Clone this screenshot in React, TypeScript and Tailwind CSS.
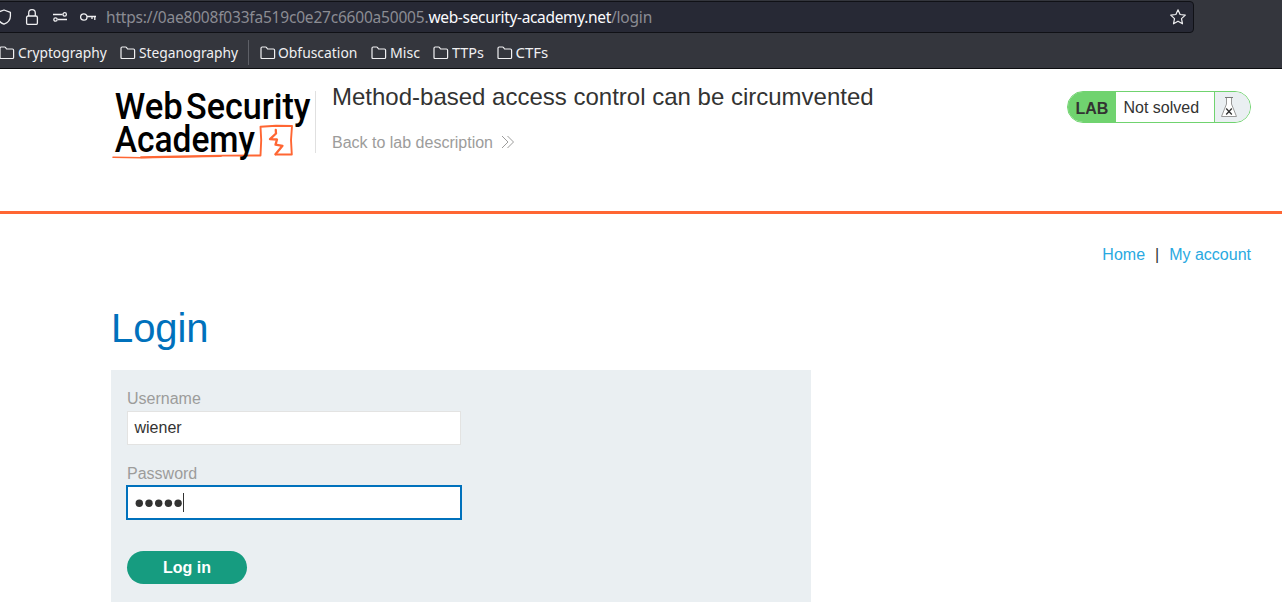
import type { ReactNode } from 'react';

function Folder() {
  return (
    <svg className="h-4 w-4 shrink-0" viewBox="0 0 16 16" fill="none" stroke="#f0f0f2" strokeWidth="1.2" strokeLinejoin="round">
      <path d="M1 12.5V3.200q0-1.200 1.200-1.200h3.400q.5 0 .8.4l1.200 1.600h5.800q1.200 0 1.200 1.200v7.300q0 1-1 1H2q-1 0-1-1z" />
    </svg>
  );
}

function Bookmark({ className, children }: { className: string; children: ReactNode }) {
  return (
    <div className={`flex shrink-0 items-center gap-[2.500px] ${className}`}>
      <Folder />
      <span className="-mt-0.5 origin-left whitespace-nowrap leading-5">{children}</span>
    </div>
  );
}

function BrowserChrome() {
  return (
    <header className="h-[69px] overflow-hidden border-b border-[#0c0d10] bg-[#34363d] pt-px font-['Noto_Sans',sans-serif] text-[#f0f0f2]">
      <div className="-ml-2 flex h-8 w-[1202px] items-center rounded-[4px] border border-[#101116] bg-[#272935] pl-[3px]">
        <svg className="h-4 w-4" viewBox="0 0 16 16" fill="none" stroke="#f0f0f2" strokeWidth="1.3" strokeLinejoin="round">
          <path d="M8 1 14.4 3.4V7c0 3.6-2.5 6.7-6.4 8.2C4.100 13.700 1.600 10.600 1.600 7V3.400z" />
        </svg>
        <svg className="ml-3 h-4 w-4" viewBox="0 0 16 16" fill="none" stroke="#f0f0f2" strokeWidth="1.3">
          <rect x="2.600" y="7" width="10.800" height="8.400" rx="1.500" />
          <path d="M4.700 7V4a3.300 3.300 0 0 1 6.600 0v3" />
        </svg>
        <svg className="ml-3 h-4 w-4" viewBox="0 0 16 16" fill="none" stroke="#f0f0f2" strokeWidth="1.3">
          <path d="M1 5.500h9.500M6 10.500h9" />
          <circle cx="12.700" cy="5.400" r="1.700" />
          <circle cx="3.500" cy="10.500" r="1.700" />
        </svg>
        <svg className="ml-3 h-4 w-4" viewBox="0 0 16 16" fill="none" stroke="#f0f0f2" strokeWidth="1.3">
          <circle cx="3.800" cy="8" r="3.200" />
          <path d="M7 7.500h9M14.800 7.500v3.500M12 7.500v2.500" />
        </svg>
        <div className="ml-[10px] whitespace-nowrap text-[15.500px] leading-[30px] tracking-[-0.200px] text-[#8b8c93]">
          https://0ae8008f033fa519c0e27c6600a50005.<span className="tracking-[-0.330px] text-[#fbfbfe]">web-security-academy.net</span>/login
        </div>
        <svg className="mr-[7px] ml-auto h-4 w-4" viewBox="0 0 16 16" fill="none" stroke="#f0f0f2" strokeWidth="1.2" strokeLinejoin="round">
          <path d="M8 .8l2.100 4.700 5.200.6-3.800 3.500 1 5.200L8 12.200l-4.500 2.600 1-5.200L.7 6.100l5.200-.6z" />
        </svg>
      </div>
      <nav className="flex h-[35px] items-center pt-[5px] text-[15px]">
        <Bookmark className="-ml-[1px] w-[121px] [&>span]:scale-x-[0.918]">Cryptography</Bookmark>
        <Bookmark className="w-[128px] [&>span]:scale-x-[0.920]">Steganography</Bookmark>
        <div className="-mt-px h-[25px] w-px bg-[#5e6067]" />
        <Bookmark className="ml-[10.500px] w-[111.500px] [&>span]:scale-x-[0.925]">Obfuscation</Bookmark>
        <Bookmark className="w-[62px] [&>span]:scale-x-[0.940]">Misc</Bookmark>
        <Bookmark className="w-[64px] [&>span]:scale-x-[0.960]">TTPs</Bookmark>
        <Bookmark className="w-[70px]">CTFs</Bookmark>
      </nav>
    </header>
  );
}

function AcademyLogo() {
  return (
    <svg className="h-[82px] w-[204px] shrink-0" viewBox="0 -10 204 82" role="img" aria-label="Web Security Academy">
      <g fill="none" stroke="#ff6633" strokeLinejoin="round" strokeLinecap="round">
        <path strokeWidth="1.600" d="M2 69.200 30 69.800 80 68.800 110 68.300" />
        <path strokeWidth="1.900" d="M30 69.300 80 68.300 112 67.600 149.500 67.500 150.200 52 149.500 38.800 165 37.700 181 38 180 52 180.800 66.500 164.500 66.500" />
        <path strokeWidth="2.300" d="M164.500 66.200 171.500 57.800 164.500 56.600 166 51.500 159 51.200 165 45.500 164.800 42" />
      </g>
      <g fill="#000" className="font-['Roboto',sans-serif] text-[37px] font-medium">
        <text x="3.700" y="31" textLength="68" lengthAdjust="spacingAndGlyphs">Web</text>
        <text x="75" y="31" textLength="124.500" lengthAdjust="spacingAndGlyphs">Security</text>
        <text x="3.700" y="64" textLength="140.300" lengthAdjust="spacingAndGlyphs">Academy</text>
      </g>
    </svg>
  );
}

function LabStatus() {
  return (
    <div className="mt-[22px] ml-auto flex h-8 w-[184px] overflow-hidden rounded-full border border-[#70d36f] bg-white text-base leading-[31px]">
      <div className="w-[48px] bg-[#70d36f] pt-px pl-[7.500px] font-bold">LAB</div>
      <div className="w-[98px] pl-[7.500px]">Not solved</div>
      <div className="flex flex-1 items-center border-l border-[#70d36f] bg-[#eaeff2] pl-[5px]">
        <svg className="h-[22px] w-[18px]" viewBox="0 0 18 22">
          <path d="M6.500 1.500V8L1.500 20.500h15L11.500 8V1.500z" fill="#fff" stroke="#999" />
          <path d="M5 1.500h8" stroke="#777" />
          <path d="m6.200 12.500 5.600 6m0-6-5.600 6" stroke="#333" strokeWidth="1.300" />
        </svg>
      </div>
    </div>
  );
}

export default function App() {
  return (
    <div className="h-[602px] overflow-hidden bg-white font-['Liberation_Sans',Arial,sans-serif] text-base text-[#333332]">
      <BrowserChrome />
      <section className="flex h-[145px] border-b-[3px] border-[#ff6633] pr-[31px] pl-[111px]">
        <div className="mt-[9px]"><AcademyLogo /></div>
        <div className="mt-[22px] h-[62px] border-l border-[#e0e0e0] pl-4">
          <h2 className="-mt-px whitespace-nowrap text-2xl leading-[14px]">Method-based access control can be circumvented</h2>
          <a href="#" className="mt-[27px] flex items-center gap-2 leading-6 text-[#9c9c9b]">
            Back to lab description
            <svg className="-mt-0.5 h-[14px] w-[14px]" viewBox="0 0 14 14" fill="none" stroke="#9c9c9b" strokeWidth="1">
              <path d="m1 1 6 6-6 6M6.500 1l6 6-6 6" />
            </svg>
          </a>
        </div>
        <LabStatus />
      </section>
      <main className="pr-[31px] pl-[111px]">
        <nav className="flex justify-end pt-[29px] leading-6 text-[#29a9e1]">
          <a href="#">Home</a>
          <span className="px-[10px] text-[#333332]">|</span>
          <a href="#">My account</a>
        </nav>
        <h1 className="mt-[37px] text-[40px] leading-[48px] tracking-[-0.100px] text-[#0071bc]">Login</h1>
        <form className="mt-[18px] h-[250px] w-[700px] bg-[#eaeff2] px-4 pt-[17px]">
          <label className="block leading-6 text-[#9c9c9b]">Username</label>
          <div className="h-[34px] w-[334px] border border-[#e3e3e2] bg-white pl-[6.500px] leading-8">wiener</div>
          <label className="mt-[17px] block h-[23px] leading-6 text-[#9c9c9b]">Password</label>
          <div className="-ml-px flex h-[35px] w-[336px] items-center border-2 border-[#0071bc] bg-white pl-[7px]">
            <svg className="h-2 w-12" viewBox="0 0 48 8" fill="#333332" role="img" aria-label="Password entered">
              <circle cx="4.300" cy="4.200" r="3.700" />
              <circle cx="14" cy="4.200" r="3.700" />
              <circle cx="23.700" cy="4.200" r="3.700" />
              <circle cx="33.400" cy="4.200" r="3.700" />
              <circle cx="43.100" cy="4.200" r="3.700" />
            </svg>
            <span className="h-[19px] w-px bg-[#333332]" />
          </div>
          <button type="button" className="mt-[31px] block h-[33px] w-[120px] rounded-full bg-[#169c80] font-bold text-white">Log in</button>
        </form>
      </main>
    </div>
  );
}
